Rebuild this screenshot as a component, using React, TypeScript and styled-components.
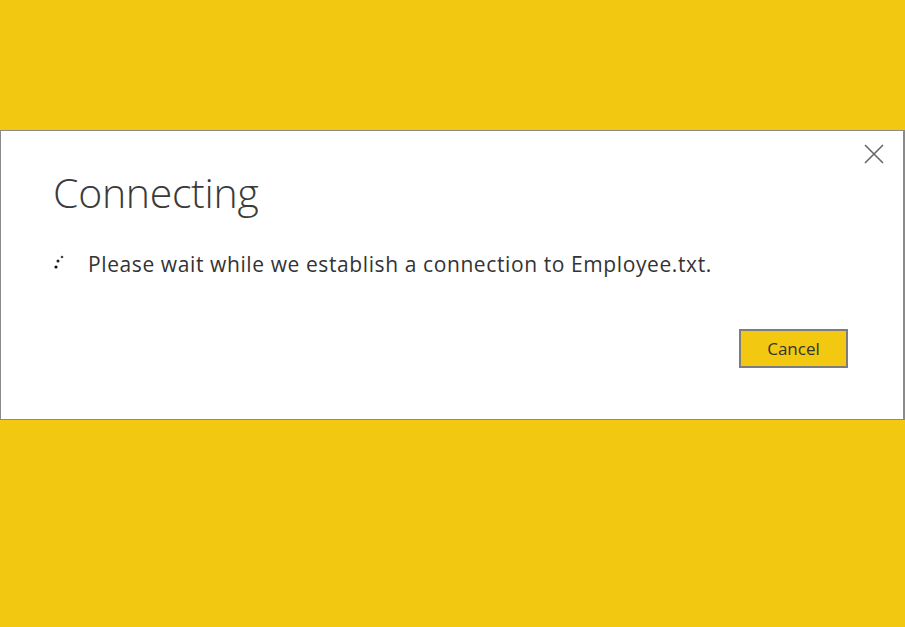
import styled, { createGlobalStyle } from "styled-components"

const Global = createGlobalStyle`
  html, body {
    margin: 0;
    padding: 0;
    background: #f2c811;
    height: 100%;
  }
  body {
    font-family: "Open Sans", "Segoe UI", sans-serif;
  }
`

const Page = styled.div`
  width: 905px;
  height: 627px;
  padding-top: 130px;
  box-sizing: border-box;
`

const Dialog = styled.div`
  position: relative;
  height: 290px;
  background: #fff;
  border: 1px solid #8a8a8a;
  border-right-width: 2px;
  box-sizing: border-box;
  padding: 34px 0 0 52px;
`

const Title = styled.h1`
  margin: 0;
  font-family: "Open Sans", sans-serif;
  font-weight: 300;
  font-size: 41px;
  line-height: 54px;
  color: #3a3a3a;
  letter-spacing: -0.3px;
`

const Message = styled.div`
  display: flex;
  align-items: center;
  gap: 21px;
  margin-top: 31px;
  font-size: 21px;
  letter-spacing: 0.6px;
  color: #333;
`

const Spinner = styled.svg`
  width: 14px;
  height: 20px;
  flex: none;
`

const Footer = styled.div`
  display: flex;
  justify-content: flex-end;
  padding-right: 55px;
  margin-top: 51px;
`

const Button = styled.button`
  width: 109px;
  height: 39px;
  background: #f2c811;
  border: 2px solid #7d7d7d;
  font-family: "Open Sans", sans-serif;
  font-size: 17px;
  color: #333;
  padding: 0;
  cursor: pointer;
`

const Close = styled.button`
  position: absolute;
  top: 11px;
  right: 17px;
  width: 24px;
  height: 24px;
  padding: 0;
  border: none;
  background: none;
  display: flex;
  align-items: center;
  justify-content: center;
`

const App = () => {
  return (
    <>
      <Global />
      <Page>
        <Dialog>
          <Close aria-label="Close">
            <svg width="20" height="20" viewBox="0 0 20 20">
              <path d="M1 1 L19 19 M19 1 L1 19" stroke="#666" strokeWidth="1.6" />
            </svg>
          </Close>
          <Title>Connecting</Title>
          <Message>
            <Spinner viewBox="0 0 14 20">
              <circle cx="9" cy="3" r="1.3" fill="#444" />
              <circle cx="5" cy="7" r="1.5" fill="#222" />
              <circle cx="3" cy="13" r="1.6" fill="#111" />
            </Spinner>
            Please wait while we establish a connection to Employee.txt.
          </Message>
          <Footer>
            <Button>Cancel</Button>
          </Footer>
        </Dialog>
      </Page>
    </>
  )
}

export default App
